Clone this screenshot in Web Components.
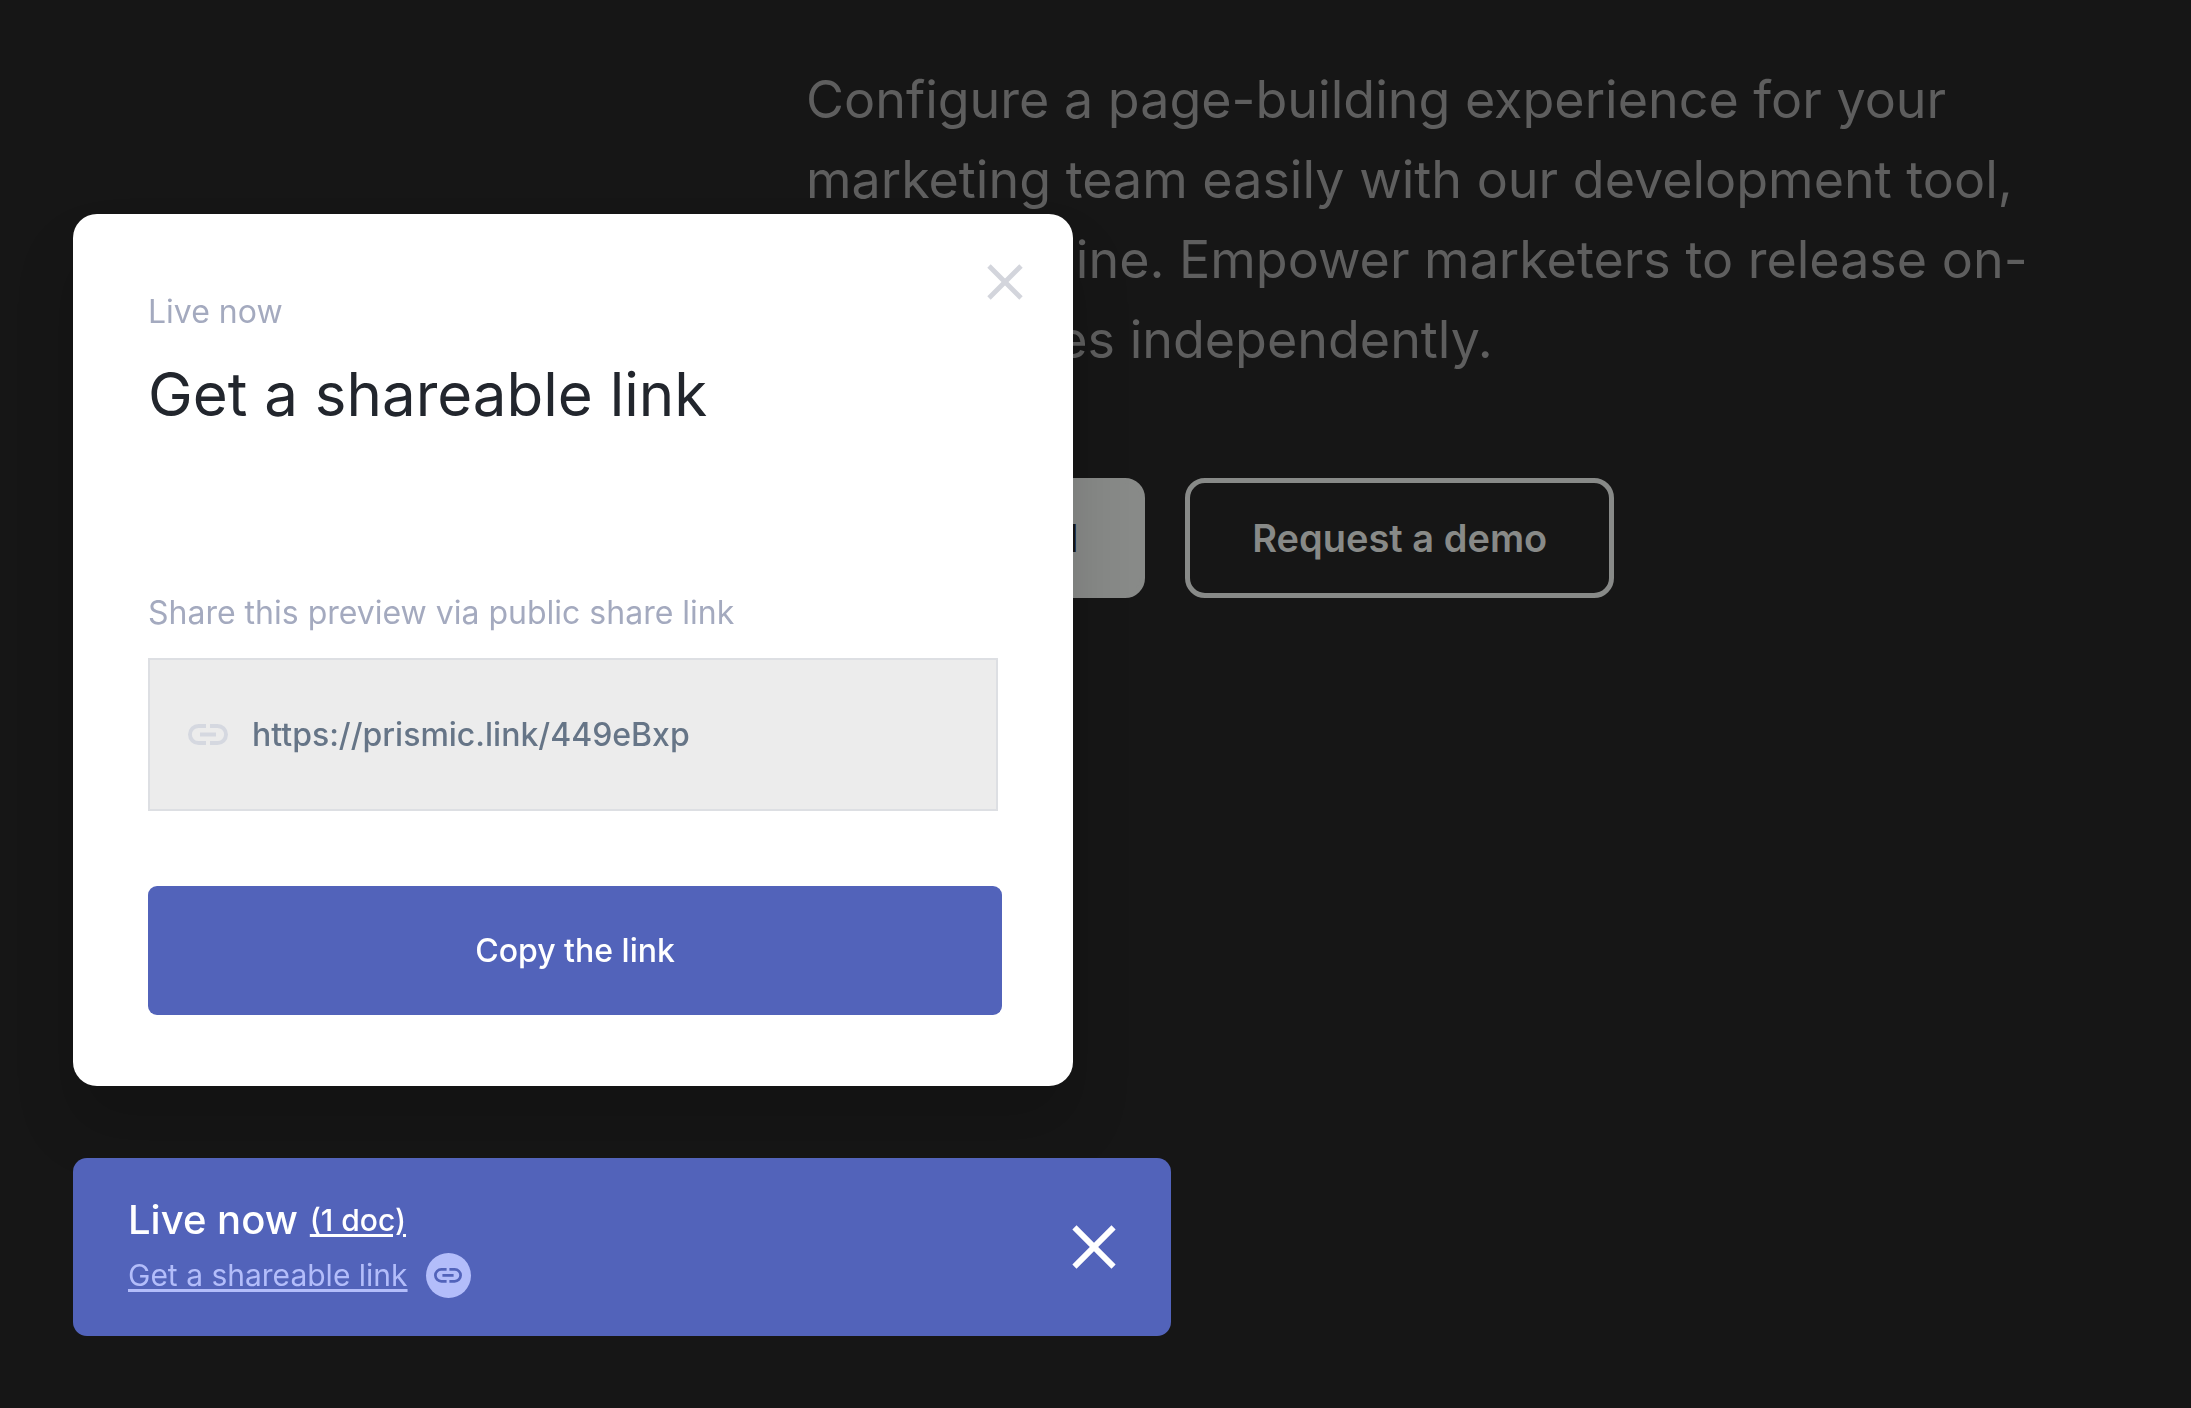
<!DOCTYPE html>
<html lang="en">
<head>
<meta charset="utf-8">
<meta name="viewport" content="width=device-width, initial-scale=1">
<title>Shareable link preview</title>
<style>
  body {
    margin: 0;
    min-height: 100vh;
    background: #161616;
    font-family: Inter, "Liberation Sans", sans-serif;
  }
</style>
</head>
<body>
<hero-copy>
  Configure a page-building experience for your<br>
  marketing team easily with our development tool,<br>
  Slice Machine. Empower marketers to release on-<br>
  brand pages independently.
  <hero-button slot="actions" variant="solid">Get started</hero-button>
  <hero-button slot="actions">Request a demo</hero-button>
</hero-copy>

<preview-dock>
  <share-dialog status="Live now" heading="Get a shareable link" url="https://prismic.link/449eBxp">
    Share this preview via public share link
    <span slot="action">Copy the link</span>
  </share-dialog>
  <preview-toolbar>
    Live now
    <span slot="docs">(1 doc)</span>
    <span slot="share">Get a shareable link</span>
  </preview-toolbar>
</preview-dock>

<script>
  class BaseElement extends HTMLElement {
    constructor() {
      super();
      this.attachShadow({ mode: "open" });
    }
    connectedCallback() {
      this.shadowRoot.innerHTML = `<style>
        * { box-sizing: border-box; }
        button { font: inherit; border: 0; padding: 0; background: none; color: inherit; cursor: pointer; }
        a { color: inherit; }
        ${this.styles()}
      </style>${this.markup()}`;
    }
  }

  customElements.define("close-icon", class extends BaseElement {
    styles() {
      return `
        :host { display: block; width: var(--size, 36px); height: var(--size, 36px); }
        svg { display: block; width: 100%; height: 100%; }`;
    }
    markup() {
      return `<svg viewBox="0 0 36 36" fill="none" stroke="currentColor" stroke-width="4.8" aria-hidden="true">
        <path d="M2 2l32 32M34 2L2 34"/></svg>`;
    }
  });

  customElements.define("link-icon", class extends BaseElement {
    styles() {
      return `
        :host { display: block; flex: none; width: var(--size, 40px); }
        svg { display: block; width: 100%; height: auto; }`;
    }
    markup() {
      return `<svg viewBox="0 0 40 21" fill="currentColor" aria-hidden="true">
        <path d="M18 0v3.9h-7.5a6.6 6.6 0 0 0 0 13.2H18V21h-7.5a10.5 10.5 0 0 1 0-21zM22 0v3.9h7.5a6.6 6.6 0 0 1 0 13.2H22V21h7.5a10.5 10.5 0 0 0 0-21zM12 8.4h16v4.2H12z"/></svg>`;
    }
  });

  customElements.define("hero-button", class extends BaseElement {
    styles() {
      return `
        :host { display: block; }
        button {
          height: 120px; padding: 0 62px; border: 5px solid #888a88; border-radius: 20px;
          color: #888a88; font-size: 38px; font-weight: 600; line-height: 48px; white-space: nowrap;
        }
        :host([variant="solid"]) button { background: #888a88; color: #161616; }`;
    }
    markup() { return `<button type="button"><slot></slot></button>`; }
  });

  customElements.define("hero-copy", class extends BaseElement {
    styles() {
      return `
        :host { display: block; padding: 60px 120px 0 806px; }
        p { margin: 0; color: #5e5e5e; font-size: 52px; line-height: 80px; white-space: nowrap; }
        .actions { display: flex; gap: 40px; padding-top: 98px; }`;
    }
    markup() {
      return `<p><slot></slot></p><div class="actions"><slot name="actions"></slot></div>`;
    }
  });

  customElements.define("preview-dock", class extends BaseElement {
    styles() {
      return `
        :host {
          position: fixed; left: 73px; bottom: 72px; width: 1098px; max-width: calc(100vw - 146px);
          display: flex; flex-direction: column; gap: 72px;
        }`;
    }
    markup() { return `<slot></slot>`; }
  });

  customElements.define("share-dialog", class extends BaseElement {
    styles() {
      return `
        :host {
          display: block; max-width: 1000px; border-radius: 24px; background: #fff;
          box-shadow: 0 40px 60px rgba(0, 0, 0, .15);
        }
        header { display: flex; justify-content: space-between; align-items: flex-start; padding: 50px 50px 0 75px; }
        .titles { padding-top: 28px; }
        .status, label { display: block; margin: 0; color: #a4aabf; font-size: 32px; line-height: 40px; }
        h2 { margin: 26px 0 0; color: #22262d; font-size: 60px; font-weight: 400; line-height: 72px; }
        .close { color: #d3d5dc; }
        .body { padding: 163px 71px 71px 75px; }
        .field {
          display: flex; align-items: center; gap: 24px; height: 153px; margin: 25px 4px 75px 0;
          padding: 0 38px; border: 2px solid #dddfe3; background: #ececec; color: #d5d8e0;
        }
        input {
          flex: 1; min-width: 0; border: 0; padding: 0; outline: 0; background: none;
          color: #667587; font: inherit; font-size: 32px; font-weight: 500; line-height: 40px;
        }
        .copy {
          display: block; width: 100%; height: 129px; border-radius: 9px;
          background: #5263ba; color: #fff; font-size: 32px; font-weight: 500;
        }`;
    }
    markup() {
      return `
        <header>
          <div class="titles">
            <p class="status">${this.getAttribute("status")}</p>
            <h2>${this.getAttribute("heading")}</h2>
          </div>
          <button class="close" type="button" aria-label="Close dialog"><close-icon></close-icon></button>
        </header>
        <div class="body">
          <label for="url"><slot></slot></label>
          <div class="field">
            <link-icon></link-icon>
            <input id="url" type="text" readonly value="${this.getAttribute("url")}">
          </div>
          <button class="copy" type="button"><slot name="action"></slot></button>
        </div>`;
    }
  });

  customElements.define("preview-toolbar", class extends BaseElement {
    styles() {
      return `
        :host {
          display: flex; align-items: center; justify-content: space-between;
          padding: 38px 55px; border-radius: 14px; background: #5263ba; color: #fff;
        }
        .row { display: flex; align-items: center; }
        .state { gap: 12px; font-size: 40px; font-weight: 500; line-height: 48px; }
        .state a { font-size: 30px; }
        .share { gap: 18px; padding-top: 9px; color: #b3bdfa; font-size: 30px; line-height: 45px; }
        a { text-decoration-thickness: 3px; text-underline-offset: 3px; }
        .badge {
          display: flex; align-items: center; justify-content: center;
          width: 45px; height: 45px; border-radius: 50%; background: #b3bdfa; color: #5263ba;
          --size: 28px;
        }
        .close { --size: 44px; }`;
    }
    markup() {
      return `
        <div>
          <div class="row state"><span><slot></slot></span><a href="#docs"><slot name="docs"></slot></a></div>
          <div class="row share">
            <a href="#share"><slot name="share"></slot></a>
            <button class="badge" type="button" aria-label="Show link"><link-icon></link-icon></button>
          </div>
        </div>
        <button class="close" type="button" aria-label="Close toolbar"><close-icon></close-icon></button>`;
    }
  });
</script>
</body>
</html>
